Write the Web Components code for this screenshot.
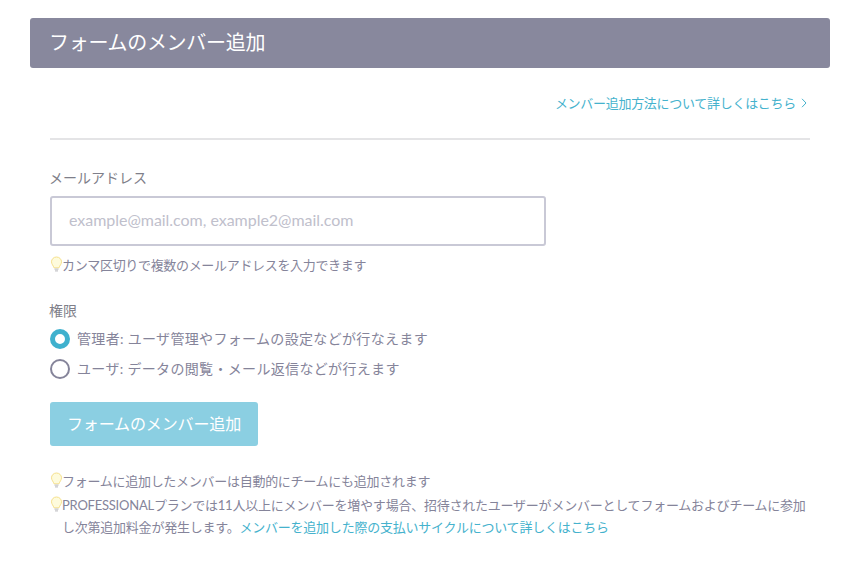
<!DOCTYPE html>
<html lang="ja">
<head>
<meta charset="utf-8">
<title>フォームのメンバー追加</title>
<style>
html,body{margin:0;padding:0;background:#fff;}
body{font-family:Lato,"Noto Sans CJK JP",sans-serif;color:#85849a;}
</style>
</head>
<body>
<member-page>
  <panel-title>フォームのメンバー追加</panel-title>
  <help-link>メンバー追加方法について詳しくはこちら</help-link>
  <field-label style="margin-top:28px">メールアドレス</field-label>
  <email-input placeholder="example@mail.com, example2@mail.com"></email-input>
  <hint-line style="margin-top:8px">カンマ区切りで複数のメールアドレスを入力できます</hint-line>
  <field-label style="margin-top:25px">権限</field-label>
  <radio-option checked style="margin-top:7px">管理者: ユーザ管理やフォームの設定などが行なえます</radio-option>
  <radio-option style="margin-top:8px">ユーザ: データの閲覧・メール返信などが行えます</radio-option>
  <submit-button>フォームのメンバー追加</submit-button>
  <hint-line style="margin-top:24px;--ls:-.28px">フォームに追加したメンバーは自動的にチームにも追加されます</hint-line>
  <hint-line style="margin-top:2px;--ls:-.23px">PROFESSIONALプランでは11人以上にメンバーを増やす場合、招待されたユーザーがメンバーとしてフォームおよびチームに参加し次第追加料金が発生します。<a href="#">メンバーを追加した際の支払いサイクルについて詳しくはこちら</a></hint-line>
</member-page>
<script>
function define(name, html, init){
  customElements.define(name, class extends HTMLElement{
    constructor(){super();this.attachShadow({mode:'open'}).innerHTML=html;}
    connectedCallback(){if(init)init(this);}
  });
}
const FONT='Lato,"Noto Sans CJK JP",sans-serif';
const BULB=`<svg width="12" height="17" viewBox="0 0 12 17" aria-hidden="true"><path d="M6.5 1C3.6 1 1.5 3.2 1.5 5.8c0 2.4 1.8 3.6 2.5 6h5c.7-2.4 2.500-3.600 2.500-6C11.500 3.200 9.400 1 6.500 1z" fill="#fefbdc" stroke="#f6e08c" stroke-width="1"/><path d="M4.500 12.400h4v1.300h-4zM5 14.200h3v1.200H5z" fill="#c6c6c9"/></svg>`;

define('member-page',`<style>
:host{display:block;box-sizing:border-box;width:858px;padding:18px 28px 0 30px;}
.body{display:flex;flex-direction:column;padding:0 20px;}
::slotted(panel-title){margin:0 -20px;}
</style><div class="body"><slot></slot></div>`);

define('panel-title',`<style>
:host{display:block;height:50px;background:#88889d;border-radius:3px;color:#fff;font:400 20px/49px ${FONT};letter-spacing:-.3px;padding-left:19px;white-space:nowrap;}
</style><slot></slot>`);

define('help-link',`<style>
:host{display:flex;justify-content:flex-end;align-items:center;gap:5px;height:72px;box-sizing:border-box;padding:0 3px 0 0;border-bottom:2px solid #e4e4e6;color:#45b2cd;font:400 13px/1 ${FONT};letter-spacing:-.29px;white-space:nowrap;}
svg{display:block;margin-top:-1px}
</style><slot></slot><svg width="6" height="10" viewBox="0 0 6 10"><path d="M1 .8 5 5 1 9.200" fill="none" stroke="#45b2cd" stroke-width="1"/></svg>`);

define('field-label',`<style>
:host{display:block;color:#7f7f8a;font:400 14px/20px ${FONT};white-space:nowrap;margin-left:-1px;}
</style><slot></slot>`);

define('email-input',`<style>
:host{display:block;width:496px;margin-top:8px;}
input{display:block;box-sizing:border-box;width:100%;height:50px;border:2px solid #c9c9d6;border-radius:3px;padding:0 17px 3px;background:#fff;font:400 16px ${FONT};letter-spacing:-.03px;outline:none;}
input::placeholder{color:#c0c0cc;opacity:1;}
</style><input type="text">`,el=>{el.shadowRoot.querySelector('input').placeholder=el.getAttribute('placeholder')||'';});

define('hint-line',`<style>
:host{display:flex;align-items:flex-start;color:#85849a;font:400 13px/22px ${FONT};letter-spacing:var(--ls,-.33px);}
svg{flex:none;display:block;margin-top:2px;}
::slotted(a){color:#45b2cd;text-decoration:none;}
</style>${BULB}<span><slot></slot></span>`);

define('radio-option',`<style>
:host{display:flex;align-items:center;gap:7px;height:22px;color:#85849a;font:400 14px/22px ${FONT};letter-spacing:.33px;white-space:nowrap;}
i{display:block;box-sizing:border-box;width:20px;height:20px;border-radius:50%;border:2px solid #85849a;background:#fff;flex:none;}
:host([checked]) i{border:5px solid #3fb1ce;}
</style><i></i><slot></slot>`);

define('submit-button',`<style>
:host{display:block;align-self:flex-start;width:208px;height:44px;margin-top:22px;border-radius:3px;background:#8bcfe2;color:#fff;text-align:center;font:400 16px/43px ${FONT};letter-spacing:-.13px;white-space:nowrap;}
</style><slot></slot>`);
</script>
</body>
</html>
